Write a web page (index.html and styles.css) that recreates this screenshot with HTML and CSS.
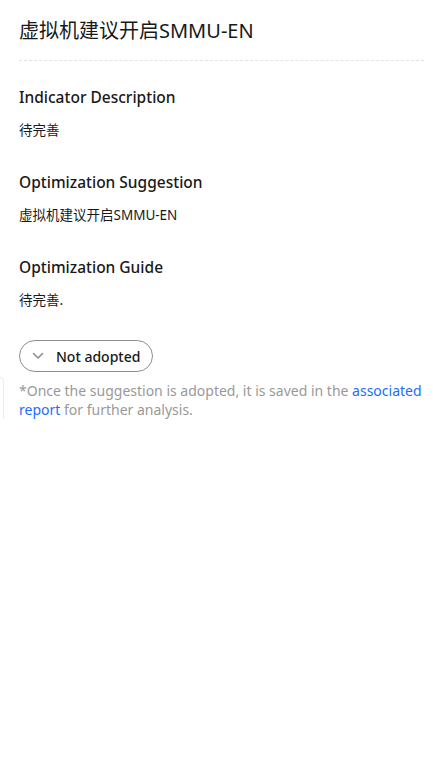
FILE: index.html
```html
<!DOCTYPE html>
<html lang="zh">
<head>
<meta charset="utf-8">
<title>SMMU-EN</title>
<link rel="stylesheet" href="styles.css">
</head>
<body>
<div class="edge-card"></div>
<main class="panel">
  <h1 class="title">虚拟机建议开启SMMU-EN</h1>
  <div class="divider"></div>
  <section class="section">
    <h2 class="section-title">Indicator Description</h2>
    <p class="section-text">待完善</p>
  </section>
  <section class="section">
    <h2 class="section-title">Optimization Suggestion</h2>
    <p class="section-text">虚拟机建议开启SMMU-EN</p>
  </section>
  <section class="section">
    <h2 class="section-title">Optimization Guide</h2>
    <p class="section-text">待完善.</p>
  </section>
  <button class="adopt-btn" type="button">
    <svg class="chev" width="12" height="8" viewBox="0 0 12 8"><path d="M1.5 1.5 L6 6 L10.5 1.5" fill="none" stroke="#8a8f99" stroke-width="1.6" stroke-linecap="round" stroke-linejoin="round"/></svg>
    <span>Not adopted</span>
  </button>
  <p class="note">*Once the suggestion is adopted, it is saved in the <a class="link" href="#">associated report</a> for further analysis.</p>
</main>
</body>
</html>
```
FILE: styles.css
```css
html, body {
  margin: 0;
  padding: 0;
  background: #ffffff;
}
body {
  font-family: "Noto Sans", "Noto Sans CJK SC", sans-serif;
  color: #191919;
  position: relative;
}
.panel {
  padding: 15px 23px 0 19px;
}
.title {
  margin: 0;
  font-size: 20px;
  font-weight: 400;
  line-height: 32px;
  color: #191919;
}
.divider {
  margin-top: 13px;
  border-top: 1px dashed #e3e3e6;
}
.section {
  margin-top: 24px;
}
.section + .section {
  margin-top: 30px;
}
.section-title {
  margin: 0;
  font-size: 15.5px;
  font-weight: 500;
  line-height: 24px;
  color: #191919;
}
.section-text {
  margin: 11px 0 0;
  font-size: 13.5px;
  line-height: 20px;
  color: #191919;
}
.adopt-btn {
  margin-top: 30px;
  display: inline-flex;
  align-items: center;
  gap: 12px;
  height: 32px;
  padding: 0 12px 0 12px;
  border: 1px solid #8f8f8f;
  border-radius: 16px;
  background: #ffffff;
  font-family: "Noto Sans", sans-serif;
  font-size: 14px;
  font-weight: 500;
  color: #191919;
}
.chev {
  display: block;
}
.note {
  margin: 9px 0 0;
  font-size: 14px;
  line-height: 19px;
  color: #999999;
}
.link {
  color: #1a6dff;
  text-decoration: none;
}
.edge-card {
  position: absolute;
  left: -10px;
  top: 377px;
  width: 12px;
  height: 54px;
  border: 1px solid #ececec;
  border-radius: 4px;
}
```
